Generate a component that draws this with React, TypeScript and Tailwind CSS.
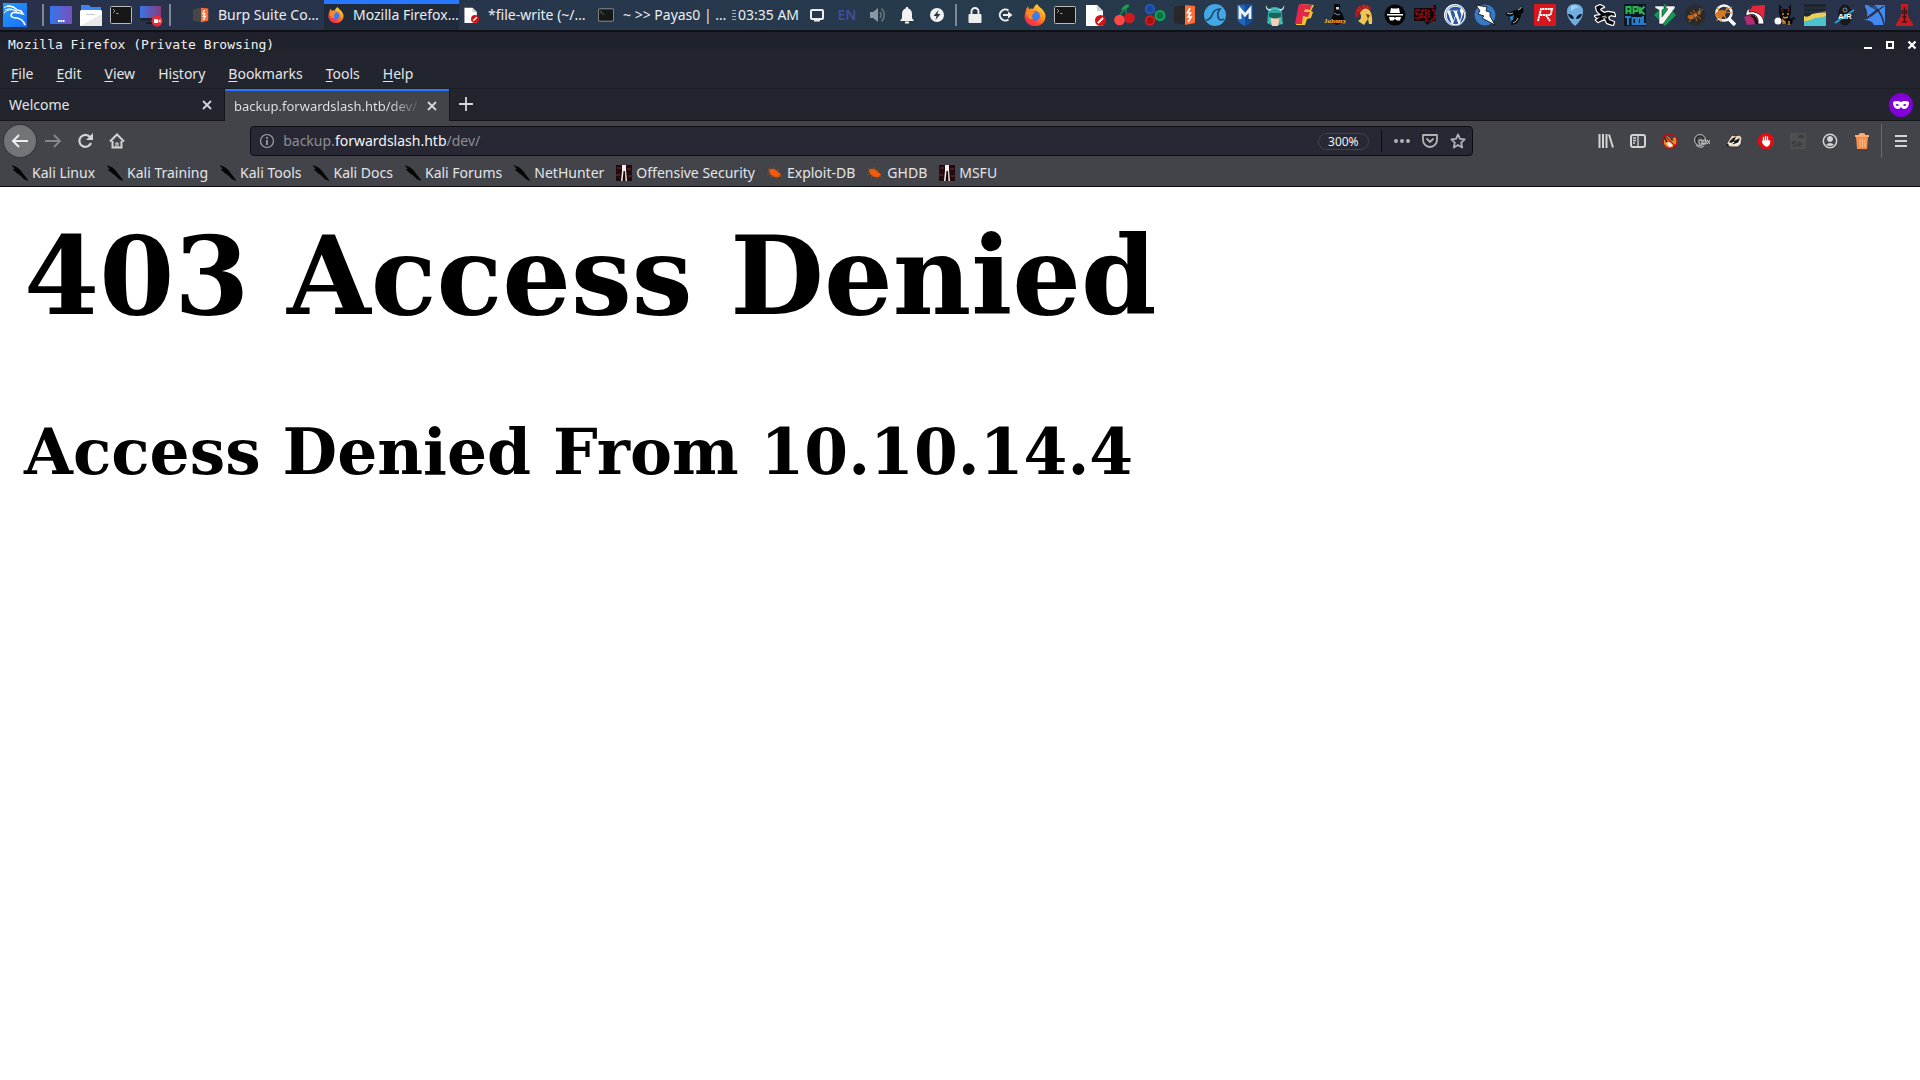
import { useState, type ReactNode } from "react";
import { FaWordpress } from "react-icons/fa";

const UI = "font-['Noto_Sans','Open_Sans',sans-serif]";

function Svg({ children, size = 22, box = 22 }: { children: ReactNode; size?: number; box?: number }) {
  return (
    <svg width={size} height={size} viewBox={`0 0 ${box} ${box}`} fill="none" aria-hidden="true" className="shrink-0">
      {children}
    </svg>
  );
}

/* ---------- panel icons ---------- */

const Kali = () => (
  <Svg size={24} box={24}>
    <defs>
      <linearGradient id="kali" x1="0" y1="0" x2="1" y2="1">
        <stop offset="0" stopColor="#1f9dff" />
        <stop offset="1" stopColor="#1f6cf0" />
      </linearGradient>
    </defs>
    <rect width="24" height="24" fill="url(#kali)" />
    <path d="M1 4.500Q8 1 13 6M1 10Q5 5 13 7.500M2 7Q8 4 14 9" stroke="#fff" strokeWidth="1" />
    <path d="M4 3Q11 3 14 7L18 8L20 11L16 10Q9 8 8 12Q8 15 14 15Q20 16 22 22" stroke="#fff" strokeWidth="1.600" />
  </Svg>
);
const Desktop = () => (
  <Svg>
    <defs>
      <linearGradient id="desk" x1="0" y1="0" x2="1" y2="0">
        <stop stopColor="#3576e8" />
        <stop offset="1" stopColor="#7a4fbd" />
      </linearGradient>
    </defs>
    <rect y="2" width="22" height="18" rx="1" fill="url(#desk)" />
    <path d="M8 17h2M10.500 17h2M13 17h1.500" stroke="#fff" strokeWidth="2" />
  </Svg>
);
const Folder = () => (
  <Svg>
    <path d="M1 1h8l2 2h10v6H1z" fill="#3f83f0" />
    <path d="M1 6h20l1 1v15H0V7z" fill="#fff" />
    <path d="M0 22L22 10V22z" fill="#e9e9e9" />
    <path d="M6 10.500h9" stroke="#c9c9c9" />
  </Svg>
);
const Term = () => (
  <Svg>
    <rect x=".5" y="2.500" width="21" height="17" rx="1" fill="#171717" stroke="#b9b9b9" />
    <path d="M3 5l2 2-2 2M6 9.500h2.500" stroke="#a5a5a5" strokeWidth=".9" />
  </Svg>
);
const Recorder = () => (
  <Svg size={24} box={24}>
    <defs>
      <linearGradient id="rec" x1="0" y1="0" x2="1" y2="0">
        <stop stopColor="#3576e8" />
        <stop offset="1" stopColor="#8a3a7c" />
      </linearGradient>
    </defs>
    <rect x="1" y="3" width="21" height="13" fill="url(#rec)" />
    <rect x="1" y="15" width="21" height="3" fill="#202534" />
    <path d="M7 20h8" stroke="#161b28" strokeWidth="2" />
    <circle cx="18" cy="18" r="5.500" fill="#ed2a33" />
    <rect x="15" y="16" width="4" height="4" fill="#fff" />
    <path d="M19 18l2.500-2v4z" fill="#fff" />
  </Svg>
);
const Burp = ({ side = "#29262c" }: { side?: string }) => (
  <Svg>
    <path d="M0 3L11 1V21L0 19z" fill={side} />
    <path d="M11 1L21 2V19L11 21z" fill="#ff6b30" />
    <path d="M16 4L13.500 9h3l-2.500 4h3L14 18" stroke="#fff" strokeWidth="1.700" />
  </Svg>
);
const BurpTask = () => <Burp side="#4a4647" />;
const Firefox = () => (
  <Svg>
    <defs>
      <linearGradient id="ff" x1=".9" y1="0" x2=".2" y2="1">
        <stop stopColor="#fff14c" />
        <stop offset=".4" stopColor="#ff9a1f" />
        <stop offset=".75" stopColor="#ff4135" />
        <stop offset="1" stopColor="#e9296a" />
      </linearGradient>
    </defs>
    <path d="M13 0Q15 3 18 5Q21.500 9 21.500 12A10.500 10 0 1 1 1.500 8Q2 4 4 2.500L5 5Q8 4 9 5Q10 2 13 0z" fill="url(#ff)" />
    <circle cx="11" cy="12" r="4.800" fill="#7057d8" />
    <path d="M11 7Q16 8 15.500 13Q14 16 11 16Q7 15 7 12z" fill="#3b7ef0" />
    <path d="M2 8L6 6l5 2-3 3Q7 14 10 15Q5 16 3 12z" fill="#ff8a24" />
  </Svg>
);
const DeniedFile = () => (
  <Svg>
    <path d="M2 1h11l6 6v15H2z" fill="#fff" />
    <path d="M13 1l6 6h-6z" fill="#cfcfcf" />
    <circle cx="16.500" cy="16.500" r="5.500" fill="#d31313" />
    <path d="M14 19L19 14" stroke="#fff" strokeWidth="2" />
  </Svg>
);
const Cherry = () => (
  <Svg>
    <path d="M5 13Q8 6 15 2M15 14Q10 8 13 3" stroke="#18854a" strokeWidth="1.600" />
    <path d="M7 6Q9 1 15 0Q14 5 7 6z" fill="#259b5a" />
    <circle cx="15.500" cy="14" r="5.300" fill="#d3191f" />
    <circle cx="5.500" cy="16" r="5.300" fill="#ff4747" />
  </Svg>
);
const Rings = () => (
  <Svg>
    <path d="M7 5L6 16L16 11z" stroke="#30405a" strokeWidth="2" />
    <circle cx="6" cy="5" r="4.200" fill="#174a9c" stroke="#2559b5" strokeWidth="2" />
    <circle cx="16" cy="11.500" r="4.500" fill="#0b713e" stroke="#10a45d" strokeWidth="2" />
    <circle cx="6" cy="16.500" r="4.200" fill="#9e1111" stroke="#d61a1f" strokeWidth="2" />
  </Svg>
);
const Wireshark = () => (
  <Svg>
    <circle cx="11" cy="11" r="11" fill="#43a7e6" />
    <path d="M2 16Q6 16 8 11Q10 5 16 5Q12 10 15 15Q17 17 20 15" stroke="#1b4768" strokeWidth="1.700" />
  </Svg>
);
const Metasploit = () => (
  <Svg>
    <path d="M3 1Q11 0 19 1V13Q19 19 11 22Q3 19 3 13z" fill="#2165bd" />
    <path d="M11 0Q16 0 19 1V13Q19 19 11 22z" fill="#174b98" />
    <path d="M6 15V5L11 11L16 5V15" stroke="#eef3f8" strokeWidth="2.800" />
  </Svg>
);
const Armitage = () => (
  <Svg>
    <path d="M4 9Q4 3 11 3Q18 3 18 9L19 20L15 21H7L3 19z" fill="#32a6a5" />
    <path d="M2 1Q3 6 7 5L6 7Q1 6 2 1zM20 1Q19 6 15 5l1 2Q21 6 20 1z" fill="#dcefee" />
    <path d="M7 13h8v5l-1 4H8l-1-4z" fill="#f1cfb7" />
    <path d="M5 9h12v4Q11 16 5 13z" fill="#17665d" />
    <path d="M7 6l4-2 4 2M4 19q3-1 2-6M18 20q-3-2-2-7" stroke="#69d5cf" />
  </Svg>
);
const Faraday = () => (
  <Svg>
    <path d="M7 0L20 1L17 7L19 8L17 14L13 15L11 21H2L6 5z" fill="#f2c62f" />
    <path d="M5 0L18 1L16 6L11 5L10 8L16 8L14 13L9 12L8 20H1L4 4z" fill="#e3264b" />
  </Svg>
);
const Johnny = () => (
  <Svg>
    <path d="M10 0h6v4l-1 2 3 3 3 8-8 4-7-3 4-10z" fill="#07080a" />
    <path d="M12 3h3v2.500h-3z" fill="#d0d3d6" />
    <path d="M10 9l4 2 2-1" stroke="#aeb4b8" strokeWidth=".8" />
    <text x="0" y="19" fill="#f5c033" fontSize="7" fontWeight="700" fontFamily="Liberation Serif, serif">Johnny</text>
  </Svg>
);
const Spartan = () => (
  <Svg>
    <path d="M1 13Q0 4 7 1Q13-1 18 4l-2 2Q8 1 4 14z" fill="#a61b22" />
    <path d="M6 9Q9 3 14 5Q19 8 18 20H15L14 15L10 21L4 17Q9 14 6 9z" fill="#f2c451" />
    <path d="M12 10l4 1-2 4z" fill="#63431b" />
    <path d="M3 6l3 1M5 3l2 3M10 1v3M14 2l-1 2" stroke="#e04a38" strokeWidth=".7" />
  </Svg>
);
const Spy = () => (
  <Svg>
    <circle cx="11" cy="11" r="10.500" fill="#050505" />
    <path d="M7 4q4 1 8 0l1 5H6zM3 10h16v1.500H3z" fill="#fff" />
    <path d="M5 13h5l1 1 1-1h5l-1 3.500h-3L11 15l-2 1.500H6z" fill="#fff" />
  </Svg>
);
const SqlMap = () => (
  <Svg>
    <path d="M0 4h18l1-3h3v16h-3l-6 4-3-4H0z" fill="#160509" />
    <path d="M6 6H2v4h4v4H1M12 18V6H8v7h4M15 6v8M19 2v4l2 1v7l-6 4" stroke="#b40b18" strokeWidth="1.500" strokeDasharray="2 .7" />
  </Svg>
);
const Wordpress = () => (
  <span className="flex h-[22px] w-[22px] items-center justify-center rounded-full bg-white">
    <FaWordpress size={21} color="#2d5ca6" aria-hidden="true" />
  </span>
);
const Zap = () => (
  <Svg>
    <circle cx="11" cy="11" r="10.500" fill="#367ac4" />
    <path d="M2 1L13 3L12 7L16 8L16 12L21 21L8 14L10 12L4 10L6 7z" fill="#fff" stroke="#05080b" strokeWidth=".8" />
  </Svg>
);
const Bull = () => (
  <Svg>
    <path d="M2 8Q5 10 9 7L15 5Q18 4 17 1Q22 8 17 10Q17 15 12 20L7 21L8 17Q3 15 5 12L2 11z" fill="#050608" />
    <path d="M3 9q3 2 6 0M14 6q3-1 3.500-3M9 19q4-1 5-5" stroke="#c5d2da" strokeWidth=".9" />
    <path d="M5 13l5-2-1 5-2 1z" fill="#2e82bd" />
  </Svg>
);
const Rbox = () => (
  <Svg>
    <rect width="22" height="22" rx="1" fill="#d9161c" />
    <path d="M4 17L7 5h11l-1.500 6H6M12 11l4 6" stroke="#fff" strokeWidth="2" strokeDasharray="2.200 .5" />
  </Svg>
);
const Alien = () => (
  <Svg>
    <path d="M11 0Q19 0 19 8Q19 15 11 22Q3 15 3 8Q3 0 11 0z" fill="#71aee0" />
    <path d="M7 2Q11 0 15 3Q11 4 7 7z" fill="#a2cff0" />
    <path d="M4 10Q9 10 10 15Q5 15 4 10zM18 10Q13 10 12 15Q17 15 18 10z" fill="#0c1930" />
  </Svg>
);
const SCORPION = "M3 7L2 3L6 1L10 3L7 4L6 6L10 9L14 8L20 9L21 12L17 11L14 13L15 16L20 18L19 21L13 19L11 15L8 16L4 18L2 16L6 13L3 14L1 12L7 11z";
const Scorpion = () => (
  <Svg>
    <path d={SCORPION} fill="#fff" stroke="#fff" strokeWidth="2.400" strokeLinejoin="round" />
    <path d={SCORPION} fill="#06080b" />
    <path d="M8 13l4-1M9 15l4-2" stroke="#fff" strokeWidth=".8" />
  </Svg>
);
const ApkTool = () => (
  <Svg>
    <rect width="22" height="22" fill="#0c1820" />
    <path d="M2.500 10V3h4v7M2.500 7h4M9.500 10V3h4v4h-4M16 3v7M20.500 2.500l-4 4 4 4" stroke="#27b34d" strokeWidth="2.200" />
    <path d="M1 13h6M4 13v8M8.500 14h3.500v6H8.500zM14 14h3v6h-3zM19 12v8h3" stroke="#277bc8" strokeWidth="2" />
  </Svg>
);
const Vim = () => (
  <Svg>
    <path d="M11 0L22 11L11 22L0 11z" fill="#119b4c" />
    <path d="M1 2h9v3L8 6v7l6-8-2-1V2h9v2L9 20H5V6L1 4z" fill="#f5f5f5" stroke="#18242a" strokeWidth=".5" />
  </Svg>
);
const AntBody = () => (
  <>
    <ellipse cx="7" cy="13" rx="3.500" ry="2.200" fill="#bd641c" />
    <circle cx="11.500" cy="11" r="1.800" fill="#d77822" />
    <circle cx="15" cy="9" r="1.800" fill="#bd641c" />
    <path d="M10 11L6 8M11.500 12l1 5M12 11l5 4M11 9L9 6M15 8l1-4M16 8l3-3M8 13l-3 5" stroke="#d77822" strokeWidth=".8" />
  </>
);
const Ant = () => (
  <Svg>
    <circle cx="11" cy="11" r="10.500" fill="#292b2d" />
    <AntBody />
  </Svg>
);
const AntSearch = () => (
  <Svg>
    <circle cx="10" cy="9" r="7.500" stroke="#f7f7f7" strokeWidth="2.500" />
    <path d="M14 14l7 7" stroke="#fff" strokeWidth="3.500" />
    <path d="M1 11Q3 6 9 6l4 2-3 4-5 3z" fill="#d77822" />
    <path d="M11 7l3-4M12 6l6-3M4 12l-1 5M7 12v6M10 11l2 4M13 8l5 1M5 7L3 3" stroke="#e0862a" strokeWidth="1.200" />
  </Svg>
);
const Tentacle = () => (
  <Svg>
    <path d="M7 2L21 1L20 15L14 19L4 12z" fill="#e3263a" />
    <path d="M0 13L4 11L13 20L3 21z" fill="#b32b78" />
    <path d="M8 3Q1 6 2 12Q7 9 11 11Q15 14 14 20H20Q20 12 13 9Q9 7 5 8Q5 5 8 3z" fill="#fff" stroke="#15161c" strokeWidth=".8" />
    <path d="M6 12Q11 14 11 20H14Q14 13 8 11z" fill="#15161c" />
  </Svg>
);
const Doberman = () => (
  <Svg>
    <path d="M5 0l4 5h5l3-5v10l-2 3 4 3-1 4H6V12L5 9z" fill="#080a0d" />
    <path d="M7 4l2 4M15 4l-1 4" stroke="#8a2237" />
    <path d="M8 10h2M13 10h2M9 13l2 1 3-1M9 20v-4l2 2v2M15 21v-4" stroke="#e18b2d" strokeWidth="1.500" />
    <circle cx="4" cy="17" r="3.500" fill="#f4faff" />
    <path d="M18 15l3-1" stroke="#0d1117" strokeWidth="2" />
  </Svg>
);
const Terrain = () => (
  <Svg>
    <rect width="22" height="22" fill="#1d2630" />
    <path d="M0 12Q4 14 8 10Q14 9 22 7V13L0 18z" fill="#edcf58" />
    <path d="M0 18Q7 16 11 14Q16 14 22 12V22H0z" fill="#4bc2cc" />
    <path d="M0 4h22M0 8h22" stroke="#303844" />
  </Svg>
);
const Air = () => (
  <Svg>
    <ellipse cx="11" cy="11" rx="7" ry="10.500" fill="#17191d" />
    <path d="M1 19L20 6" stroke="#24a9e0" strokeWidth="1.700" />
    <circle cx="11" cy="6" r="2" stroke="#8d9298" strokeWidth="1" />
    <text x="4" y="15" fill="#f7f7f7" fontSize="8" fontWeight="700" fontFamily="Liberation Sans, sans-serif">AIR</text>
  </Svg>
);
const BlueFin = () => (
  <Svg>
    <path d="M1 1Q9 1 13 5L3 13Q4 7 1 3z" fill="#4589ef" />
    <path d="M10 1H21V21Q19 8 10 1z" fill="#4589ef" />
    <path d="M0 16Q8 13 14 7Q19 13 20 21H10Q8 16 0 16z" fill="#4589ef" />
    <path d="M5 2Q17 5 20 21M2 15L20 2" stroke="#24334a" strokeWidth="1.200" />
  </Svg>
);
const RedTower = () => (
  <Svg>
    <path d="M7 0h7v12l5 8v2H2v-2l5-8z" fill="#c51c21" />
    <path d="M10.500 3v15M8 18h5M8.500 6v4M12.500 6v4M8.500 13h4" stroke="#4a1115" strokeWidth="1.600" />
  </Svg>
);
const Lock = () => (
  <Svg>
    <rect x="4.500" y="10" width="13" height="9" rx="1" fill="#eee" />
    <path d="M7.500 11V7.500a3.500 3.500 0 0 1 7 0V11" stroke="#eee" strokeWidth="1.900" />
  </Svg>
);
const Logout = () => (
  <Svg>
    <path d="M14.500 6.500A5.500 5.500 0 1 0 14.500 15.500" stroke="#eee" strokeWidth="2" />
    <path d="M9 11h6" stroke="#eee" strokeWidth="2" />
    <path d="M14 7.500l4.500 3.500-4.500 3.500z" fill="#eee" />
  </Svg>
);
const Screen = () => (
  <Svg>
    <rect x="5" y="6" width="12" height="9" rx="1" stroke="#eee" strokeWidth="2" />
    <path d="M8 16.500h6" stroke="#eee" strokeWidth="2" />
  </Svg>
);
const Volume = () => (
  <Svg>
    <path d="M4 8h3l5-4v14l-5-4H4z" fill="#8b97a3" />
    <path d="M14 8q2 3 0 6M15.500 4.500q5.500 6.500 0 13" stroke="#65727f" strokeWidth="1.600" />
  </Svg>
);
const Bell = () => (
  <Svg>
    <path d="M11 4q5 1 5 6v4l2 3H4l2-3v-4q0-5 5-6z" fill="#f1f1f1" />
    <path d="M11 3v3M9 18.500h4" stroke="#f1f1f1" strokeWidth="2" />
  </Svg>
);
const Bolt = () => (
  <Svg>
    <circle cx="11" cy="11" r="7" fill="#f1f1f1" />
    <path d="M12.500 6L7.500 12h3l-1 4 5-6h-3z" fill="#26384a" />
  </Svg>
);

const launchers: [string, () => ReactNode][] = [
  ["Lock screen", Lock], ["Log out", Logout], ["Firefox", Firefox], ["Terminal", Term],
  ["Text editor", DeniedFile], ["CherryTree", Cherry], ["Maltego", Rings], ["Burp Suite", Burp],
  ["Wireshark", Wireshark], ["Metasploit", Metasploit], ["Armitage", Armitage], ["Faraday", Faraday],
  ["Johnny", Johnny], ["Sparta", Spartan], ["Anonymous", Spy], ["sqlmap", SqlMap],
  ["WPScan", Wordpress], ["ZAP", Zap], ["BeEF", Bull], ["Radare", Rbox],
  ["Alien", Alien], ["Scorpion", Scorpion], ["apktool", ApkTool], ["Vim", Vim],
  ["DirBuster", Ant], ["Ant search", AntSearch], ["Kraken", Tentacle], ["BloodHound", Doberman],
  ["EtherApe", Terrain], ["Aircrack", Air], ["Fin", BlueFin], ["Tower", RedTower],
];

const Separator = () => <span className="h-[22px] w-0.5 shrink-0 bg-[#7f8793]" />;

const tasks: [string, () => ReactNode, boolean][] = [
  ["Burp Suite Co…", BurpTask, false],
  ["Mozilla Firefox…", Firefox, true],
  ["*file-write (~/…", DeniedFile, false],
  ["~ >> Payas0 | …", Term, false],
];

function Cell({ label, children }: { label: string; children: ReactNode }) {
  return (
    <button aria-label={label} className="flex h-full w-[30px] shrink-0 items-center justify-center">
      {children}
    </button>
  );
}

function Panel() {
  return (
    <header className="flex h-8 items-center border-b-2 border-[#101116] bg-linear-to-r from-[#29314a] via-[#263b4d] to-[#29324a] text-sm text-[#eceef0]">
      <Cell label="Applications"><Kali /></Cell>
      <div className="flex w-4 shrink-0 justify-end pr-0.5"><Separator /></div>
      <Cell label="Show desktop"><Desktop /></Cell>
      <Cell label="Files"><Folder /></Cell>
      <Cell label="Terminal"><Term /></Cell>
      <Cell label="Screen recorder"><Recorder /></Cell>
      <div className="flex w-[23px] shrink-0 pl-[3px]"><Separator /></div>
      <nav aria-label="Windows" className="flex h-full min-w-0 flex-1">
        {tasks.map(([name, Icon, active]) => (
          <button
            key={name}
            className={`flex min-w-0 flex-1 items-center gap-[9px] whitespace-nowrap border-t-4 pb-1 pl-1 ${active ? "border-[#2777ff] bg-[#1f2b3a]" : "border-transparent"}`}
          >
            <span className="[&>svg]:h-4 [&>svg]:w-4">
              <Icon />
            </span>
            {name}
          </button>
        ))}
      </nav>
      <div className="flex w-[9px] shrink-0 flex-col items-center gap-0.5">
        {[0, 1, 2, 3].map((n) => <span key={n} className="h-px w-1 bg-[#a3abb4]" />)}
      </div>
      <time className="w-16 shrink-0 whitespace-nowrap">03:35 AM</time>
      <Cell label="Display"><Screen /></Cell>
      <Cell label="Keyboard layout"><span className="font-semibold text-[#424d9c]">EN</span></Cell>
      <Cell label="Volume"><Volume /></Cell>
      <Cell label="Notifications"><Bell /></Cell>
      <Cell label="Power"><Bolt /></Cell>
      <div className="flex w-2 shrink-0 justify-center"><Separator /></div>
      {launchers.map(([name, Icon]) => <Cell key={name} label={name}><Icon /></Cell>)}
    </header>
  );
}

/* ---------- browser chrome ---------- */

const menus: [string, string, string][] = [
  ["", "F", "ile"], ["", "E", "dit"], ["", "V", "iew"], ["Hi", "s", "tory"],
  ["", "B", "ookmarks"], ["", "T", "ools"], ["", "H", "elp"],
];

const CloseX = () => (
  <Svg size={12} box={12}>
    <path d="M2 2l8 8M10 2l-8 8" stroke="#d6d7d9" strokeWidth="1.800" />
  </Svg>
);

const KaliMark = () => (
  <Svg size={16} box={16}>
    <path d="M0 0.500L5 2.500L8 5L11 9L13 11.500L16 15.500L12 14L8 10L5 8L3 6L1 5L3 4z" fill="#050505" stroke="#050505" strokeWidth=".5" />
  </Svg>
);
const OffSec = () => (
  <Svg size={16} box={16}>
    <rect width="16" height="16" fill="#210b0e" />
    <path d="M1 3h4M11 4h4M0 10h4M12 11h4" stroke="#783039" />
    <path d="M6 0h4v5l1 11H9.500L9 6H7.500L6.500 16H5l1-10z" fill="#f3eee9" />
  </Svg>
);
const Bug = () => (
  <Svg size={16} box={16}>
    <path d="M3 4Q7 3 10 6L14 9.500L12 12L8 12Q4 11 3 8L1.500 6z" fill="#f05c0b" />
    <path d="M1 3l3 3M7 2l1 3M12 4l-2 3M0 9h4M4 13l2-3M15 12l-3-2M10 14l-1-3" stroke="#a9521f" strokeWidth=".7" />
  </Svg>
);

const bookmarks: [string, () => ReactNode][] = [
  ["Kali Linux", KaliMark], ["Kali Training", KaliMark], ["Kali Tools", KaliMark], ["Kali Docs", KaliMark],
  ["Kali Forums", KaliMark], ["NetHunter", KaliMark], ["Offensive Security", OffSec],
  ["Exploit-DB", Bug], ["GHDB", Bug], ["MSFU", OffSec],
];

const G = "#d3d3d5";

const toolbar: [string, ReactNode][] = [
  ["Library", <path key="i" d="M1.500 1v14M5 1v14M8.500 1v14M11 1.500l4 13" stroke={G} strokeWidth="2" />],
  ["Sidebars", <g key="i"><rect x="1" y="2" width="14" height="12" rx="2" stroke={G} strokeWidth="2" /><path d="M8 2v12M3 5h3M3 7.500h3M3 10h2" stroke={G} strokeWidth="1.300" /></g>],
  ["FoxyProxy", <g key="i"><path d="M2 5l3-2 4 3 5-2 1 6-5 5H4l-2-4z" fill="#e38529" /><path d="M4 10l5-1 3 2-4 4z" fill="#f4eee5" /><path d="M2 4l3 5M9 6l2 1" stroke="#352015" strokeWidth="1.500" /><circle cx="8" cy="8" r="7.200" stroke="#c50c12" strokeWidth="1.200" /><path d="M3 3l10 10" stroke="#c50c12" strokeWidth="1.200" /></g>],
  ["Cookie quick", <g key="i"><circle cx="6" cy="7" r="5.500" stroke="#bbb" strokeWidth="1" /><circle cx="6" cy="7" r="4" stroke="#202226" strokeWidth="1" /><path d="M2 12q4 4 8 1" stroke="#a7a7a7" strokeWidth="1.200" /><path d="M5 7h3v4H5zM9 7h3v4H9zM13 7l3 4M16 7l-3 4" stroke="#d5d5d5" strokeWidth="1" /></g>],
  ["Badger", <g key="i"><path d="M0 12Q2 8 4 5L6 2L9 3L14 2L16 5L15 11L12 14L5 14z" fill="#e8d6be" stroke="#17191b" strokeWidth=".7" /><path d="M3 9L7 5l3-1-2 4 6-3-2 5-5 1z" fill="#17191b" /><path d="M3 12l5-3M9 12l5-3" stroke="#fff" strokeWidth="1.300" /><circle cx="1.500" cy="12" r="1.200" fill="#17191b" /></g>],
  ["Blocker", <g key="i"><path d="M5 0h6l5 5v6l-5 5H5l-5-5V5z" fill="#e20d12" /><path d="M5.500 8V4.500M7.500 7V3.500M9.500 7V4M5 8h6.500v2q-1 3-3 3t-4-4z" fill="#fff" stroke="#fff" strokeWidth="1.300" strokeLinecap="round" /></g>],
  ["Selenium", <g key="i"><rect width="16" height="16" fill="#504f4f" /><rect x="8" y="2" width="6" height="3" fill="#3b3d44" /><text x="1" y="14" fill="#36383f" fontSize="9" fontWeight="700" fontFamily="Liberation Sans, sans-serif">Se</text></g>],
  ["Account", <g key="i"><circle cx="8" cy="8" r="6.700" stroke={G} strokeWidth="1.500" /><circle cx="8" cy="6" r="2.500" fill={G} stroke={G} /><path d="M4 11.500q4-3 8 0-4 3-8 0z" fill={G} /></g>],
  ["Forget", <g key="i"><path d="M2 4h12l-1 12H3z" fill="#f78b49" /><path d="M1 3h14M5 2q3-2 6 0" stroke="#ffad70" strokeWidth="2" /><path d="M6 6v8M8.500 6v8M11 6v8" stroke="#ffc391" strokeWidth="1" /></g>],
];

function ToolButton({ label, children }: { label: string; children: ReactNode }) {
  return (
    <button aria-label={label} className="flex h-8 w-8 shrink-0 items-center justify-center">
      <Svg size={16} box={16}>{children}</Svg>
    </button>
  );
}

function TitleBar() {
  return (
    <div className="flex h-[26px] items-center justify-between bg-linear-to-b from-[#1f2029] to-[#22252e] pl-2 font-['DejaVu_Sans_Mono',monospace] text-[13px] text-[#eff0f1]">
      <span>Mozilla Firefox (Private Browsing)</span>
      <div className="flex gap-1.5 [&>button]:flex [&>button]:h-6 [&>button]:w-4 [&>button]:items-center [&>button]:justify-center">
        <button aria-label="Minimize"><Svg size={12} box={12}><path d="M2 9h8" stroke="#fff" strokeWidth="2" /></Svg></button>
        <button aria-label="Maximize"><Svg size={12} box={12}><rect x="3" y="3" width="6" height="6" stroke="#fff" strokeWidth="2" /></Svg></button>
        <button aria-label="Close"><Svg size={12} box={12}><path d="M2.500 2.500l7 7M9.500 2.500l-7 7" stroke="#fff" strokeWidth="2.200" /></Svg></button>
      </div>
    </div>
  );
}

function MenuBar() {
  return (
    <nav aria-label="Menu" className="flex h-[30px] items-center gap-px pt-0.5">
      {menus.map(([before, key, after]) => (
        <button key={before + key + after} className="px-[11px]">
          {before}<span className="underline underline-offset-2">{key}</span>{after}
        </button>
      ))}
    </nav>
  );
}

function TabStrip() {
  return (
    <div className="flex h-[33px] border-t border-[#1c1e26]">
      <div className="flex w-[225px] items-center justify-between border-b border-[#15161b] pl-[9px] pr-3">
        <button>Welcome</button>
        <button aria-label="Close Welcome"><CloseX /></button>
      </div>
      <div className="flex w-56 items-center justify-between border-t-2 border-[#2777ff] bg-[#42444a] pl-[9px] pr-[11px] shadow-[1px_0_0_#15161b,-1px_0_0_#15161b]">
        <button className="whitespace-nowrap bg-linear-to-r from-[#e4e5e7] from-85% to-[#5c5e64] bg-clip-text text-[13px] text-transparent">
          backup.forwardslash.htb/dev/
        </button>
        <button aria-label="Close tab"><CloseX /></button>
      </div>
      <div className="flex flex-1 items-center justify-between border-b border-[#15161b] pl-2.5 pr-[7px]">
        <button aria-label="New tab"><Svg size={16} box={16}><path d="M7 0v14M0 7h14" stroke="#d9dadc" strokeWidth="1.800" /></Svg></button>
        <span aria-label="Private browsing" className="flex h-6 w-6 items-center justify-center rounded-full bg-[#8000d7]">
          <Svg size={16} box={16}>
            <path d="M0 5Q4 3 8 5Q12 3 16 5Q16 12 11 12Q9 12 8 10Q7 12 5 12Q0 12 0 5zM2.500 8Q4 6 6 8Q4 10 2.500 8zM10 8Q12 6 13.500 8Q12 10 10 8z" fill="#fff" fillRule="evenodd" />
          </Svg>
        </span>
      </div>
    </div>
  );
}

const ADDRESS = "backup.forwardslash.htb/dev/";

function NavBar() {
  const [url, setUrl] = useState(ADDRESS);
  const pristine = url === ADDRESS;
  return (
    <div className="flex h-10 items-center pl-1">
      <button aria-label="Back" className="mr-px flex h-8 w-8 shrink-0 items-center justify-center rounded-full bg-[#737478] ring-1 ring-[#36383d]">
        <Svg size={18} box={18}><path d="M17 9H2M8 3L2 9l6 6" stroke="#ededee" strokeWidth="2" /></Svg>
      </button>
      <ToolButton label="Forward"><path d="M0 8h15M9 2l6 6-6 6" stroke="#85878b" strokeWidth="1.900" /></ToolButton>
      <ToolButton label="Reload"><path d="M13 4A6 6 0 1 0 14 10" stroke={G} strokeWidth="2.200" /><path d="M9 7h7V0z" fill={G} /></ToolButton>
      <ToolButton label="Home"><path d="M1 8.500L8 1.500l7 7" stroke={G} strokeWidth="2" /><path d="M3.500 8v6.500h9V8" stroke={G} strokeWidth="2" /><path d="M7 15v-5h2v5" stroke={G} strokeWidth="1.200" /></ToolButton>
      <div className="grow-[118] basis-0" />
      <div className="flex h-[30px] grow-[1221] basis-0 items-center rounded border border-[#0d0e12] bg-[#272833] pl-2">
        <button aria-label="Site information"><Svg size={16} box={16}><circle cx="8" cy="8" r="6.500" stroke="#a5a6ab" strokeWidth="1.200" /><path d="M8 7v5M8 4v1.700" stroke="#a5a6ab" strokeWidth="1.700" /></Svg></button>
        <div className="relative ml-2 min-w-0 flex-1">
          <input
            aria-label="Address"
            value={url}
            onChange={(e) => setUrl(e.target.value)}
            className={`block w-full bg-transparent outline-none ${pristine ? "text-transparent" : "text-white"}`}
          />
          {pristine && (
            <span className="pointer-events-none absolute inset-0 whitespace-nowrap text-[#8d8e95]">
              backup.<span className="text-[#f5f5f6]">forwardslash.htb</span>/dev/
            </span>
          )}
        </div>
        <button className="h-[17px] w-[51px] rounded-full border border-[#42444c] text-[12px] leading-[15px] text-[#f3f3f4]">300%</button>
        <span className="ml-3 mr-1.5 h-[22px] w-px bg-[#0d0e12]" />
        <div className="flex [&>button]:w-7">
          <ToolButton label="Page actions"><path d="M2 8h.01M8 8h.01M14 8h.01" stroke="#b1b2b6" strokeWidth="4" strokeLinecap="round" /></ToolButton>
          <ToolButton label="Save to Pocket"><path d="M1 2h14v5a7 7 0 0 1-14 0z" stroke="#b1b2b6" strokeWidth="1.800" strokeLinejoin="round" /><path d="M5 6l3 3 3-3" stroke="#b1b2b6" strokeWidth="1.800" strokeLinecap="round" /></ToolButton>
          <ToolButton label="Bookmark this page"><path d="M8 1.500l2 4.300 4.700.6-3.500 3.200 1 4.900L8 12l-4.200 2.500 1-4.900L1.300 6.400 6 5.800z" stroke="#b1b2b6" strokeWidth="1.800" strokeLinejoin="round" /></ToolButton>
        </div>
      </div>
      <div className="grow-[118] basis-0" />
      {toolbar.map(([label, drawing]) => <ToolButton key={label} label={label}>{drawing}</ToolButton>)}
      <span className="ml-[3px] h-[34px] w-px bg-[#696b70]" />
      <button aria-label="Open menu" className="flex h-8 w-[38px] items-center justify-center"><Svg size={14} box={14}><path d="M1 2h12M1 7h12M1 12h12" stroke={G} strokeWidth="2" /></Svg></button>
    </div>
  );
}

export default function App() {
  return (
    <div className={`flex min-h-screen flex-col bg-white ${UI}`}>
      <Panel />
      <section aria-label="Browser controls" className="bg-[#22252e] text-sm text-[#e4e5e7]">
        <TitleBar />
        <MenuBar />
        <TabStrip />
        <div className="border-b border-[#0c0c0f] bg-[#42444a]">
          <NavBar />
          <nav aria-label="Bookmarks" className="flex h-[25px] items-center gap-3 pb-0.5 pl-3">
            {bookmarks.map(([name, Icon]) => (
              <a key={name} href="#" className="flex items-center gap-1 whitespace-nowrap"><Icon />{name}</a>
            ))}
          </nav>
        </div>
      </section>
      <main className="px-6 pt-[25px] font-['DejaVu_Serif',serif] font-bold text-black">
        <h1 className="text-[108px] leading-[128px]">403 Access Denied</h1>
        <h3 className="mt-[75px] text-[63px] leading-[75px]">Access Denied From 10.10.14.4</h3>
      </main>
    </div>
  );
}
